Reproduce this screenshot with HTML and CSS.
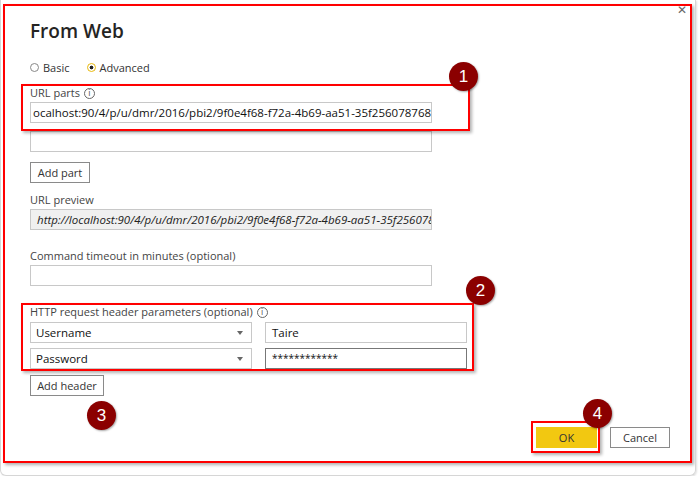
FILE: index.html
```html
<!DOCTYPE html>
<html lang="en">
<head>
  <meta charset="UTF-8">
  <title>From Web</title>
  <link rel="stylesheet" href="styles.css">
</head>
<body>
  <div class="window">
    <span class="close">&#x2715;</span>
    <div class="dialog">
      <h1 class="title">From Web</h1>

      <div class="radios">
        <label class="radio"><span class="dot"></span>Basic</label>
        <label class="radio on"><span class="dot"></span>Advanced</label>
      </div>

      <div class="label">URL parts <span class="info">i</span></div>
      <div class="field">ocalhost:90/4/p/u/dmr/2016/pbi2/9f0e4f68-f72a-4b69-aa51-35f256078768</div>
      <div class="field gap"></div>
      <button class="btn add-part">Add part</button>

      <div class="label">URL preview</div>
      <div class="field preview">http://localhost:90/4/p/u/dmr/2016/pbi2/9f0e4f68-f72a-4b69-aa51-35f256078768</div>

      <div class="label spaced">Command timeout in minutes (optional)</div>
      <div class="field"></div>

      <div class="label spaced hdr">HTTP request header parameters (optional) <span class="info">i</span></div>
      <div class="hrow first">
        <div class="select">Username<span class="caret"></span></div>
        <div class="field value">Taire</div>
      </div>
      <div class="hrow">
        <div class="select">Password<span class="caret"></span></div>
        <div class="field value dark">************</div>
      </div>
      <button class="btn add-header">Add header</button>

      <div class="footer">
        <button class="btn ok">OK</button>
        <button class="btn">Cancel</button>
      </div>
    </div>

    <!-- annotation overlay -->
    <div class="mark frame-all"></div>
    <div class="mark frame-url"></div>
    <div class="mark frame-hdr"></div>
    <div class="mark frame-ok"></div>
    <span class="badge b1">1</span>
    <span class="badge b2">2</span>
    <span class="badge b3">3</span>
    <span class="badge b4">4</span>
  </div>
</body>
</html>
```

FILE: styles.css
```css
body { margin:0; background:#fff; font-family:"Open Sans","Noto Sans",sans-serif; font-size:11px; color:#252423; }
.window { position:relative; width:694px; height:475px; border:1px solid #d6d6d6; border-top:none; border-radius:0 0 6px 6px;
          box-shadow:1px 1px 2px rgba(0,0,0,0.12); overflow:hidden; }
.close { position:absolute; top:1px; right:8px; font-size:12px; color:#666; }
.dialog { display:flex; flex-direction:column; align-items:flex-start; height:100%; box-sizing:border-box; padding:17px 0 27px 29px; }
.title { font-size:19px; font-weight:600; margin:0; line-height:28px; color:#252423; }
.radios { display:flex; gap:17px; margin-top:13px; height:18px; align-items:center; }
.radio { display:flex; align-items:center; gap:4px; color:#333; }
.radio .dot { width:7px; height:7px; border:1.5px solid #888; border-radius:50%; box-sizing:content-box; }
.radio.on .dot { border-color:#e8b90d; background:radial-gradient(circle,#222 0 1.6px,#fff 2.2px); }
.label { margin-top:8px; height:18px; line-height:18px; color:#444; display:flex; align-items:center; gap:4px; }
.label.spaced { margin-top:17px; }
.label.hdr { margin-top:17px; }
.info { width:9px; height:9px; border:1px solid #666; border-radius:50%; font-size:8px; line-height:9px; text-align:center; color:#555; font-family:"DejaVu Sans",sans-serif; }
.field { width:402px; height:21px; box-sizing:border-box; border:1px solid #c8c8c8; background:#fff; padding:0 2px;
         line-height:19px; white-space:nowrap; overflow:hidden; color:#111; font-size:11.5px; }
.field.gap { margin-top:8px; }
.field.preview { background:#f0f0f0; font-style:italic; padding-left:6px; color:#222; }
.btn { height:21px; box-sizing:border-box; border:1px solid #8a8a8a; background:#fff; font-family:inherit; font-size:11px; color:#333; padding:0 10px; }
.add-part { margin-top:10px; width:60px; padding:0; }
.add-header { margin-top:6px; width:74px; padding:0; }
.hrow { display:flex; gap:13px; margin-top:5px; }
.hrow.first { margin-top:1px; }
.select { position:relative; width:222px; height:21px; box-sizing:border-box; border:1px solid #c8c8c8; padding:0 5px; line-height:19px; color:#111; font-size:11.5px; }
.caret { position:absolute; right:8px; top:8px; border-left:3px solid transparent; border-right:3px solid transparent; border-top:4px solid #666; }
.field.value { width:202px; padding:0 6px; }
.field.dark { border-color:#777; font-size:10px; }
.footer { margin-top:auto; align-self:flex-end; display:flex; gap:13px; margin-right:25px; }
.footer .btn { width:60px; padding:0; }
.btn.ok { background:#f2c811; border-color:#f2c811; width:61px; }

.mark { position:absolute; border:2px solid #f00; box-shadow:2px 2px 3px rgba(0,0,0,0.3); }
.frame-all { left:2px; top:4px; width:685px; height:455px; }
.frame-url { left:20px; top:84px; width:445px; height:43px; }
.frame-hdr { left:20px; top:303px; width:449px; height:64px; }
.frame-ok { left:530px; top:421px; width:65px; height:28px; }
.badge { position:absolute; width:29px; height:29px; border-radius:50%; background:#8b0000; color:#fff; font-size:17px;
         text-align:center; line-height:29px; font-family:"Liberation Sans",sans-serif; box-shadow:1px 1px 2px rgba(0,0,0,0.35); }
.b1 { left:448px; top:62px; }
.b2 { left:465px; top:276px; }
.b3 { left:86px; top:401px; }
.b4 { left:582px; top:399px; }
```
